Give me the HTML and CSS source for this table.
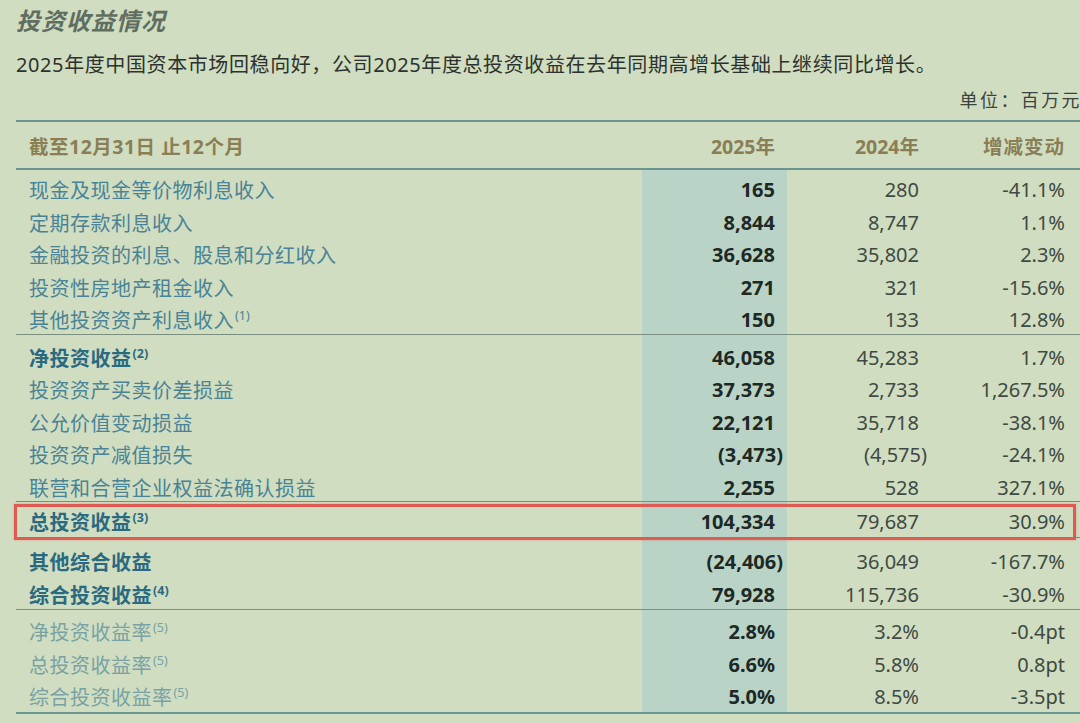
FILE: index.html
```html
<!DOCTYPE html>
<html lang="zh-CN">
<head>
<meta charset="utf-8">
<title>投资收益情况</title>
<link rel="stylesheet" href="styles.css">
</head>
<body>
<div class="page">
  <h1 class="title">投资收益情况</h1>
  <p class="intro">2025年度中国资本市场回稳向好，公司2025年度总投资收益在去年同期高增长基础上继续同比增长。</p>
  <div class="unit">单位：百万元</div>

  <div class="table">
    <div class="row head">
      <div class="lab">截至12月31日 止12个月</div>
      <div class="num">2025年</div>
      <div class="num">2024年</div>
      <div class="num chg">增减变动</div>
    </div>

    <div class="body">
      <div class="group g1">
        <div class="row"><div class="lab">现金及现金等价物利息收入</div><div class="num cur">165</div><div class="num">280</div><div class="num chg">-41.1%</div></div>
        <div class="row"><div class="lab">定期存款利息收入</div><div class="num cur">8,844</div><div class="num">8,747</div><div class="num chg">1.1%</div></div>
        <div class="row"><div class="lab">金融投资的利息、股息和分红收入</div><div class="num cur">36,628</div><div class="num">35,802</div><div class="num chg">2.3%</div></div>
        <div class="row"><div class="lab">投资性房地产租金收入</div><div class="num cur">271</div><div class="num">321</div><div class="num chg">-15.6%</div></div>
        <div class="row"><div class="lab">其他投资资产利息收入<sup>(1)</sup></div><div class="num cur">150</div><div class="num">133</div><div class="num chg">12.8%</div></div>
      </div>

      <div class="group g2">
        <div class="row"><div class="lab strong">净投资收益<sup>(2)</sup></div><div class="num cur">46,058</div><div class="num">45,283</div><div class="num chg">1.7%</div></div>
        <div class="row"><div class="lab">投资资产买卖价差损益</div><div class="num cur">37,373</div><div class="num">2,733</div><div class="num chg">1,267.5%</div></div>
        <div class="row"><div class="lab">公允价值变动损益</div><div class="num cur">22,121</div><div class="num">35,718</div><div class="num chg">-38.1%</div></div>
        <div class="row"><div class="lab">投资资产减值损失</div><div class="num cur paren">(3,473)</div><div class="num paren">(4,575)</div><div class="num chg">-24.1%</div></div>
        <div class="row"><div class="lab">联营和合营企业权益法确认损益</div><div class="num cur">2,255</div><div class="num">528</div><div class="num chg">327.1%</div></div>
      </div>

      <div class="row total"><div class="lab strong">总投资收益<sup>(3)</sup></div><div class="num cur">104,334</div><div class="num">79,687</div><div class="num chg">30.9%</div></div>

      <div class="group g3">
        <div class="row tall"><div class="lab strong">其他综合收益</div><div class="num cur paren">(24,406)</div><div class="num">36,049</div><div class="num chg">-167.7%</div></div>
        <div class="row tall"><div class="lab strong">综合投资收益<sup>(4)</sup></div><div class="num cur">79,928</div><div class="num">115,736</div><div class="num chg">-30.9%</div></div>
      </div>

      <div class="group g4">
        <div class="row"><div class="lab light">净投资收益率<sup>(5)</sup></div><div class="num cur">2.8%</div><div class="num">3.2%</div><div class="num chg">-0.4pt</div></div>
        <div class="row"><div class="lab light">总投资收益率<sup>(5)</sup></div><div class="num cur">6.6%</div><div class="num">5.8%</div><div class="num chg">0.8pt</div></div>
        <div class="row"><div class="lab light">综合投资收益率<sup>(5)</sup></div><div class="num cur">5.0%</div><div class="num">8.5%</div><div class="num chg">-3.5pt</div></div>
      </div>
    </div>
  </div>
</div>
</body>
</html>
```

FILE: styles.css
```css
* { box-sizing: border-box; }

html, body {
  margin: 0;
  padding: 0;
  background: #d0ddc1;
}

body {
  font-family: "Noto Sans", "Open Sans", "Noto Sans CJK SC", sans-serif;
  color: #3a463f;
  width: 1080px;
  height: 723px;
  overflow: hidden;
}

.page {
  padding: 4px 0 0 16px;
}

.title {
  margin: 0;
  font-family: "Noto Sans CJK SC", sans-serif;
  font-size: 24px;
  line-height: 32px;
  font-weight: 700;
  font-style: italic;
  letter-spacing: 1px;
  color: #5f6e60;
}

.intro {
  margin: 14px 0 0;
  font-size: 20px;
  line-height: 30px;
  letter-spacing: 0.6px;
  color: #2d322e;
  white-space: nowrap;
}

.unit {
  margin-top: 8px;
  height: 24px;
  line-height: 24px;
  font-size: 18px;
  letter-spacing: 2.4px;
  text-align: right;
  margin-right: -2px;
  color: #3b443e;
}

.table {
  margin-top: 8px;
  width: 1064px;
  border-top: 2px solid #6b9591;
  border-bottom: 2px solid #6b9794;
}

.row {
  display: grid;
  grid-template-columns: 626px 145px 144px 149px;
  align-items: center;
  height: 32.5px;
  font-size: 20px;
}

.body .row > div {
  padding-top: 4px;
}

.row.head {
  height: 48px;
  border-bottom: 2px solid #6b9591;
  font-weight: 700;
  color: #8a7e55;
  font-size: 19.5px;
}

.row.head .lab,
.row.head .num {
  color: #8a7e55;
}

.row.head .num.chg {
  font-weight: 700;
  letter-spacing: 1px;
}

.body {
  background: linear-gradient(to right,
    transparent 626px,
    #b9d4c6 626px,
    #b9d4c6 771px,
    transparent 771px);
}

.lab {
  padding-left: 13px;
  color: #4a8396;
  letter-spacing: 0.5px;
  white-space: nowrap;
}

.lab.strong {
  color: #2a6a80;
  font-weight: 700;
}

.lab.light {
  color: #78a2a4;
}

.lab sup {
  font-size: 12.5px;
  vertical-align: 0;
  position: relative;
  top: -8px;
  margin-left: 1px;
  letter-spacing: 0;
}

.num {
  text-align: right;
  padding-right: 12px;
  color: #3e4a43;
  white-space: nowrap;
}

.num.cur {
  font-weight: 700;
  color: #1e2824;
}

.num.chg {
  padding-right: 15px;
}

.num.paren {
  padding-right: 4px;
}

.group {
  border-bottom: 1.5px solid #7b8f81;
}

.g1 { padding-top: 1px; }
.g2 { padding-top: 4px; }
.g3 { padding-top: 5px; }
.g4 { padding-top: 3px; padding-bottom: 1.5px; border-bottom: none; }

.row.tall { height: 33px; }

.row.total {
  position: relative;
  height: 36px;
  border-bottom: 1.5px solid #7b8f81;
}

.row.total::after {
  content: "";
  position: absolute;
  top: 1.5px;
  left: -2px;
  right: 4px;
  bottom: -2.5px;
  border: 3px solid #df5a53;
  box-shadow: 0 0 2px rgba(223, 90, 83, 0.5);
  pointer-events: none;
}
```
